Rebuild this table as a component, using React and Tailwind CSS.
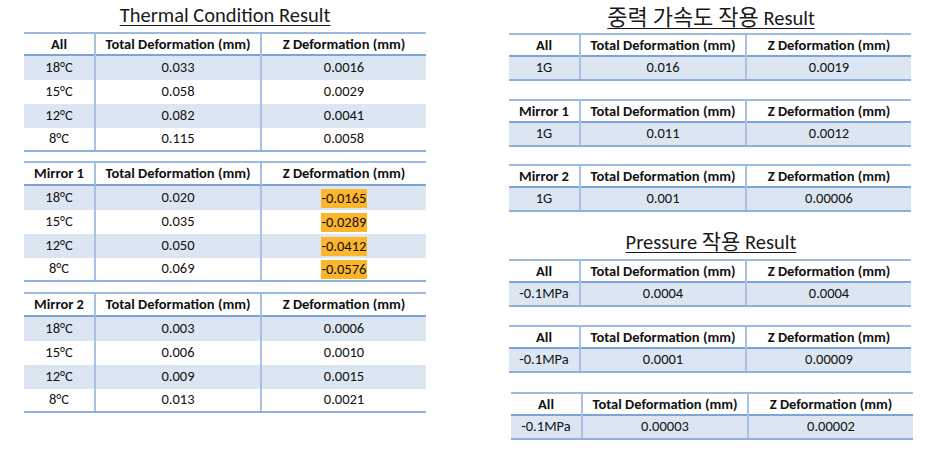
import React from "react";

const FONT = { fontFamily: 'Carlito, Lato, "Noto Sans CJK KR", sans-serif' };
const KR = { fontFamily: '"Noto Sans CJK KR", sans-serif' };

function Row({ cells, shaded, last, highlight }) {
  return (
    <div
      className={`grid grid-cols-[72px_166px_164px] h-[24px] ${shaded ? "bg-[#dce6f2]" : "bg-white"} ${last ? "border-b-2 border-[#8eaedb]" : ""}`}
    >
      {cells.map((c, i) => (
        <div
          key={i}
          className={`flex items-center justify-center text-[14.5px] text-[#111] ${i < 2 ? "border-r-2 border-[#a9c2e4]" : ""}`}
        >
          {highlight && i === 2 ? (
            <span className="bg-[#fdb52c] px-[1px] leading-[19px]">{c}</span>
          ) : (
            c
          )}
        </div>
      ))}
    </div>
  );
}

function Table({ label, rows, highlight, alternate, headH = "h-[24px]", className = "" }) {
  return (
    <div className={`w-[402px] ${className}`}>
      <div
        className={`grid grid-cols-[72px_166px_164px] ${headH} bg-white border-t-2 border-b-2 border-t-[#9dbae0] border-b-[#7ea3d6]`}
      >
        {[label, "Total Deformation (mm)", "Z Deformation (mm)"].map((h, i) => (
          <div
            key={i}
            className={`flex items-center justify-center text-[14.5px] font-bold text-[#111] ${i < 2 ? "border-r-2 border-[#a9c2e4]" : ""}`}
          >
            {h}
          </div>
        ))}
      </div>
      {rows.map((r, i) => (
        <Row
          key={i}
          cells={r}
          shaded={alternate ? i % 2 === 0 : true}
          last={i === rows.length - 1}
          highlight={highlight}
        />
      ))}
    </div>
  );
}

function Title({ children, className = "" }) {
  return (
    <div className={`flex justify-center ${className}`}>
      <span className="text-[20.5px] leading-[28px] underline underline-offset-[3px] decoration-1 text-[#1a1a1a] whitespace-pre">
        {children}
      </span>
    </div>
  );
}

export default function App() {
  return (
    <div className="w-[940px] h-[451px] bg-white flex" style={FONT}>
      <div className="ml-[24px] w-[402px] flex flex-col">
        <Title className="h-[32px] pt-[1px]">Thermal Condition Result</Title>
        <Table
          label="All"
          alternate
          rows={[
            ["18°C", "0.033", "0.0016"],
            ["15°C", "0.058", "0.0029"],
            ["12°C", "0.082", "0.0041"],
            ["8°C", "0.115", "0.0058"],
          ]}
        />
        <Table
          label="Mirror 1"
          alternate
          highlight
          headH="h-[25px]"
          className="mt-[9px]"
          rows={[
            ["18°C", "0.020", "-0.0165"],
            ["15°C", "0.035", "-0.0289"],
            ["12°C", "0.050", "-0.0412"],
            ["8°C", "0.069", "-0.0576"],
          ]}
        />
        <Table
          label="Mirror 2"
          alternate
          headH="h-[25px]"
          className="mt-[10px]"
          rows={[
            ["18°C", "0.003", "0.0006"],
            ["15°C", "0.006", "0.0010"],
            ["12°C", "0.009", "0.0015"],
            ["8°C", "0.013", "0.0021"],
          ]}
        />
      </div>
      <div className="ml-[83px] w-[404px] flex flex-col">
        <Title className="h-[33px] pt-[1px]">
          <span style={KR} className="text-[22px] leading-[28px]">중력 가속도 작용</span> Result
        </Title>
        <Table label="All" rows={[["1G", "0.016", "0.0019"]]} />
        <Table label="Mirror 1" className="mt-[18px]" rows={[["1G", "0.011", "0.0012"]]} />
        <Table label="Mirror 2" className="mt-[17px]" rows={[["1G", "0.001", "0.00006"]]} />
        <Title className="h-[47px] pt-[14px]">
          Pressure <span style={KR} className="text-[21px] leading-[28px]">작용</span> Result
        </Title>
        <Table label="All" rows={[["-0.1MPa", "0.0004", "0.0004"]]} />
        <Table label="All" className="mt-[18px]" rows={[["-0.1MPa", "0.0001", "0.00009"]]} />
        <Table label="All" className="mt-[19px] ml-[2px]" rows={[["-0.1MPa", "0.00003", "0.00002"]]} />
      </div>
    </div>
  );
}
